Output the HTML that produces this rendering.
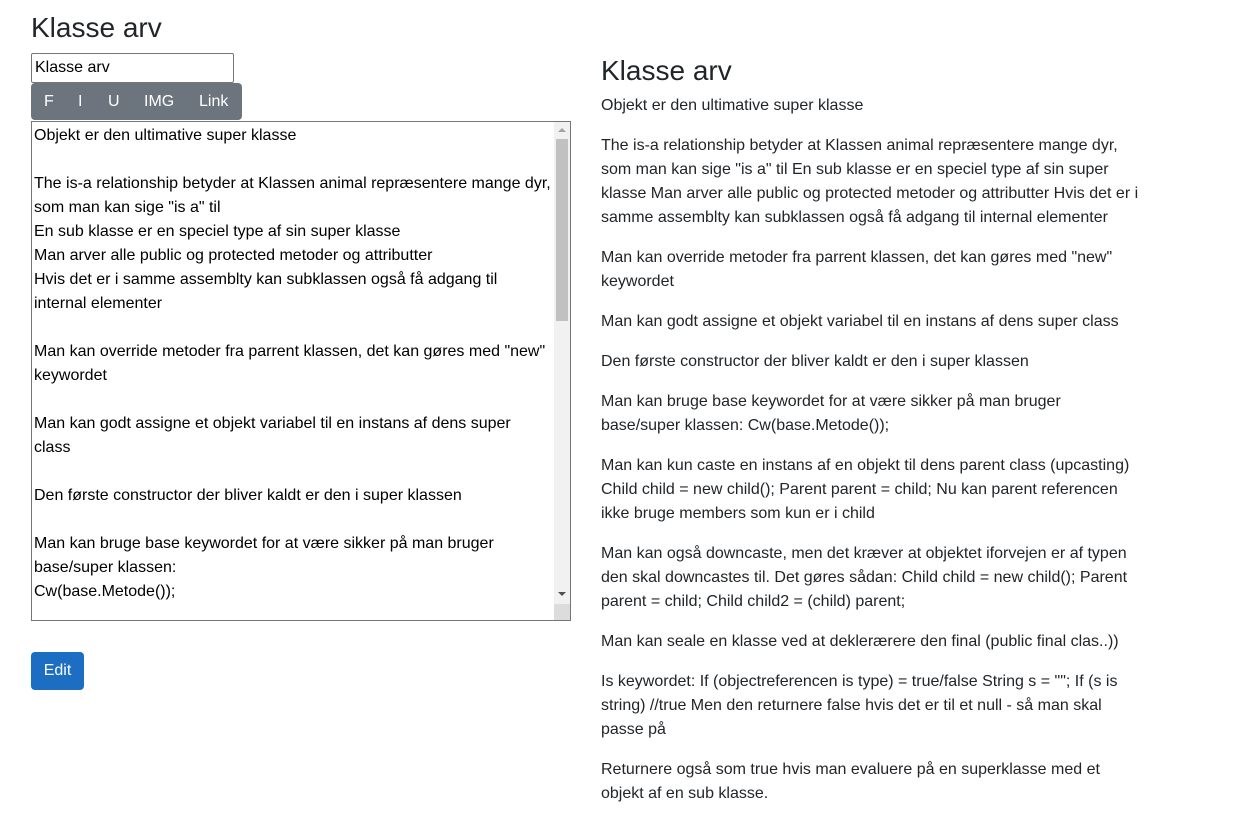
<!DOCTYPE html>
<html><head><meta charset="utf-8"><style>
body{margin:0;background:#fff;font-family:"Liberation Sans",Arial,sans-serif;color:#212529;font-size:16px;line-height:24px;}
.a{position:absolute;}
.ta div{height:24px;white-space:nowrap;}
.rp p{margin:0 0 16px 0;}
</style></head><body>
<div class="a" style="left:31px;top:10px;font-size:28px;line-height:36px;">Klasse arv</div>
<div class="a" style="left:31px;top:53px;border:1px solid #767676;border-radius:2px;font-size:16px;line-height:28px;padding-left:3px;box-sizing:border-box;width:203px;height:30px;color:#000">Klasse arv</div>
<div class="a" style="left:31px;top:83px;width:211px;height:37px;background:#6c757d;border-radius:4px;color:#fff;font-size:16px;line-height:37px;">
<span class="a" style="left:13px">F</span><span class="a" style="left:47px">I</span><span class="a" style="left:77px">U</span><span class="a" style="left:113px">IMG</span><span class="a" style="left:168px">Link</span></div>
<div class="a" style="left:31px;top:121px;width:540px;height:500px;border:1px solid #767676;box-sizing:border-box;overflow:hidden;">
<div class="ta a" style="left:2px;top:2px;color:#000">
<div>Objekt er den ultimative super klasse</div><div></div>
<div>The is-a relationship betyder at Klassen animal repræsentere mange dyr,</div>
<div>som man kan sige "is a" til</div>
<div>En sub klasse er en speciel type af sin super klasse</div>
<div>Man arver alle public og protected metoder og attributter</div>
<div>Hvis det er i samme assemblty kan subklassen også få adgang til</div>
<div>internal elementer</div><div></div>
<div>Man kan override metoder fra parrent klassen, det kan gøres med "new"</div>
<div>keywordet</div><div></div>
<div>Man kan godt assigne et objekt variabel til en instans af dens super</div>
<div>class</div><div></div>
<div>Den første constructor der bliver kaldt er den i super klassen</div><div></div>
<div>Man kan bruge base keywordet for at være sikker på man bruger</div>
<div>base/super klassen:</div>
<div>Cw(base.Metode());</div>
</div>
<div class="a" style="left:522px;top:0;width:16px;height:498px;background:#f1f1f1"></div>
<div class="a" style="left:524px;top:17px;width:12px;height:182px;background:#c1c1c1"></div>
<div class="a" style="left:526px;top:6px;width:0;height:0;border:4px solid transparent;border-bottom-color:#a3a3a3;border-top:0"></div>
<div class="a" style="left:526px;top:470px;width:0;height:0;border:4px solid transparent;border-top-color:#505050;border-bottom:0"></div>
<div class="a" style="left:522px;top:482px;width:16px;height:16px;background:#dcdcdc"></div>
</div>
<div class="a" style="left:31px;top:652px;width:53px;height:38px;background:#1b6ec2;border-radius:4px;color:#fff;text-align:center;line-height:38px;">Edit</div>
<div class="a" style="left:601px;top:53px;font-size:28px;line-height:36px;">Klasse arv</div>
<div class="a rp" style="left:601px;top:94px;width:545px;">
<p>Objekt er den ultimative super klasse</p>
<p>The is-a relationship betyder at Klassen animal repræsentere mange dyr, som man kan sige "is a" til En sub klasse er en speciel type af sin super klasse Man arver alle public og protected metoder og attributter Hvis det er i samme assemblty kan subklassen også få adgang til internal elementer</p>
<p>Man kan override metoder fra parrent klassen, det kan gøres med "new"<br>keywordet</p>
<p>Man kan godt assigne et objekt variabel til en instans af dens super class</p>
<p>Den første constructor der bliver kaldt er den i super klassen</p>
<p>Man kan bruge base keywordet for at være sikker på man bruger<br>base/super klassen: Cw(base.Metode());</p>
<p>Man kan kun caste en instans af en objekt til dens parent class (upcasting)<br>Child child = new child(); Parent parent = child; Nu kan parent referencen<br>ikke bruge members som kun er i child</p>
<p>Man kan også downcaste, men det kræver at objektet iforvejen er af typen<br>den skal downcastes til. Det gøres sådan: Child child = new child(); Parent<br>parent = child; Child child2 = (child) parent;</p>
<p>Man kan seale en klasse ved at deklerærere den final (public final clas..))</p>
<p>Is keywordet: If (objectreferencen is type) = true/false String s = ""; If (s is<br>string) //true Men den returnere false hvis det er til et null - så man skal<br>passe på</p>
<p>Returnere også som true hvis man evaluere på en superklasse med et<br>objekt af en sub klasse.</p>
</div>
</body></html>
